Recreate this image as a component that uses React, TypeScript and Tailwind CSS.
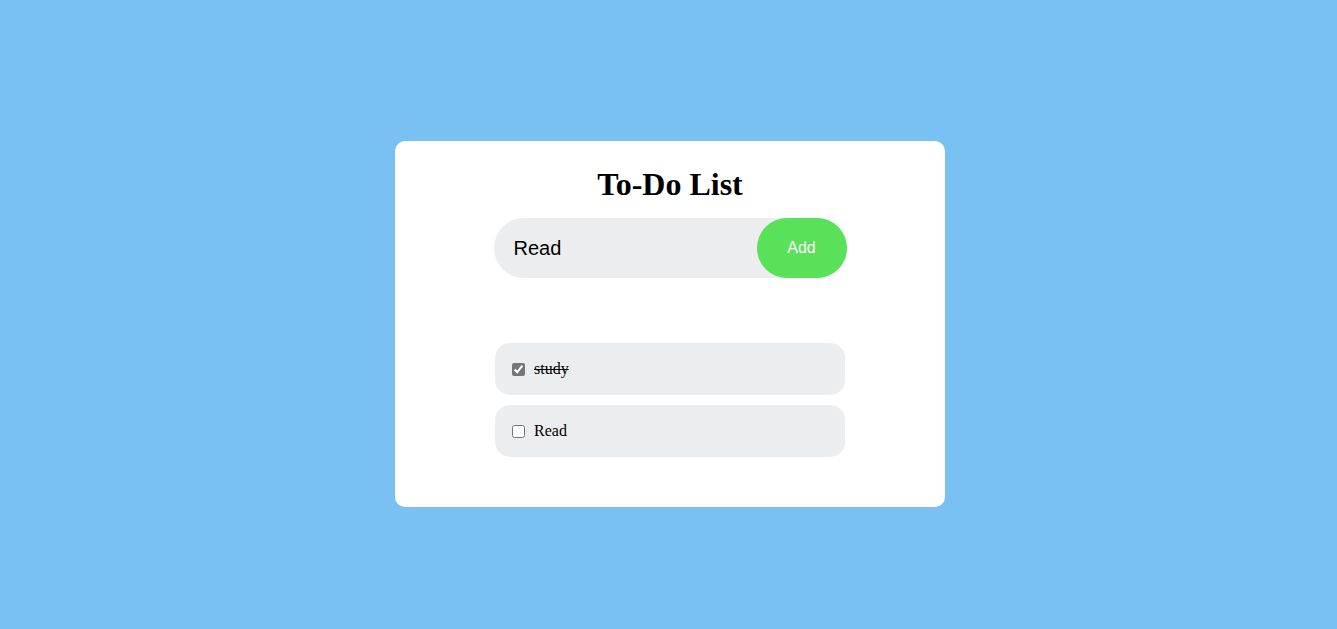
import React, { useState } from 'react';

type Task = { id: number; text: string; done: boolean };

export default function App() {
  const [value, setValue] = useState('Read');
  const [tasks, setTasks] = useState<Task[]>([
    { id: 1, text: 'study', done: true },
    { id: 2, text: 'Read', done: false },
  ]);

  const addTask = () => {
    if (!value.trim()) return;
    setTasks([...tasks, { id: Date.now(), text: value, done: false }]);
    setValue('');
  };

  const toggle = (id: number) =>
    setTasks(tasks.map((t) => (t.id === id ? { ...t, done: !t.done } : t)));

  return (
    <div className="min-h-screen bg-[#7ac1f3] pt-[141px] pl-[3px] flex justify-center items-start font-['Liberation_Serif',serif]">
      <div className="w-[550px] rounded-[10px] bg-white pt-[25px] pb-[50px] flex flex-col items-center">
        <h1 className="text-[32px] font-bold leading-[37px] text-black">To-Do List</h1>

        {/* input row */}
        <div className="mt-[15px] flex h-[60px] w-[353px] items-center rounded-full bg-[#ecedef]">
          <input
            value={value}
            onChange={(e) => setValue(e.target.value)}
            className="h-full min-w-0 flex-1 bg-transparent pl-[20px] text-[20px] text-black outline-none font-['Liberation_Sans',Arial,sans-serif]"
          />
          <button
            onClick={addTask}
            className="h-full w-[90px] shrink-0 rounded-full bg-[#58e159] text-[16px] text-white font-['Liberation_Sans',Arial,sans-serif]"
          >
            Add
          </button>
        </div>

        {/* task list */}
        <ul className="mt-[65px] flex w-[350px] flex-col gap-[10px]">
          {tasks.map((t) => (
            <li key={t.id} className="flex h-[52px] items-center rounded-[15px] bg-[#ecedef] pl-[13px]">
              <input
                type="checkbox"
                checked={t.done}
                onChange={() => toggle(t.id)}
                className="m-[3px_3px_3px_4px] h-[13px] w-[13px] accent-[#767676]"
              />
              <span className={`ml-[6px] text-[16px] text-black ${t.done ? 'line-through' : ''}`}>{t.text}</span>
            </li>
          ))}
        </ul>
      </div>
    </div>
  );
}
